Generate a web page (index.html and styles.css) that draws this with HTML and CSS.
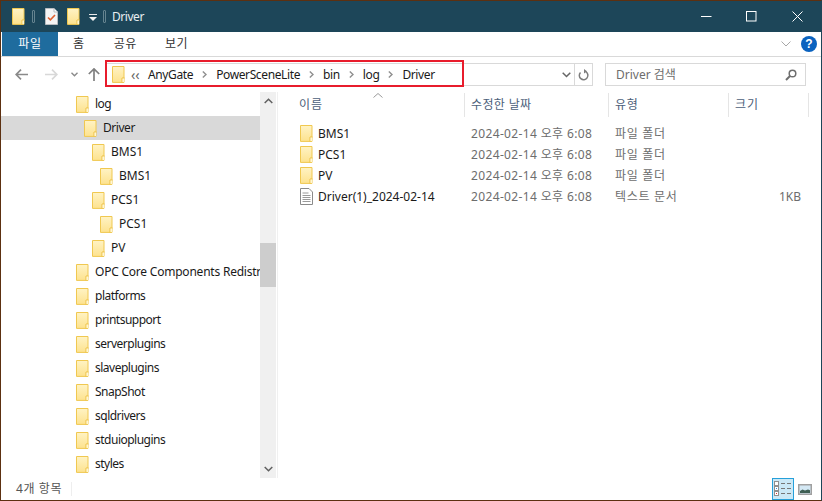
FILE: index.html
```html
<!DOCTYPE html>
<html lang="ko">
<head>
<meta charset="utf-8">
<title>Driver</title>
<link rel="stylesheet" href="styles.css">
</head>
<body>
<svg class="defs" width="0" height="0" aria-hidden="true">
  <defs>
    <linearGradient id="fg" x1="0" y1="0" x2="0" y2="1">
      <stop offset="0" stop-color="#fff3c4"/>
      <stop offset="1" stop-color="#fde28e"/>
    </linearGradient>
    <symbol id="folder" viewBox="0 0 13 17">
      <path d="M.5.5h11.500v15.900H.5z" fill="url(#fg)" stroke="#f0c850"/>
      <path d="M10 16.500v-4.500h2.500" fill="none" stroke="#ecc044"/>
      <rect x="10.500" y="12.500" width="1.500" height="3.500" fill="#fff6d2"/>
    </symbol>
  </defs>
</svg>
<div class="window">
  <header class="titlebar">
    <svg class="ic folder"><use href="#folder"/></svg>
    <span class="qsep first"></span>
    <svg class="note" width="13" height="17" viewBox="0 0 13 17">
      <path d="M.5.5h8.500l3.500 3.500v12.500H.5z" fill="#f4f4f4" stroke="#b8bcc0"/>
      <path d="M9 .5v3.500h3.500" fill="#fff" stroke="#b8bcc0"/>
      <path d="M3 9.500l2.400 2.400L10 7" fill="none" stroke="#e0602f" stroke-width="1.600"/>
    </svg>
    <svg class="ic folder second"><use href="#folder"/></svg>
    <svg class="qdrop" width="8" height="8" viewBox="0 0 8 8">
      <path d="M0 0h8v1H0z" fill="#e8e8e8"/>
      <path d="M0 3h8L4 7z" fill="#f2f2f2"/>
    </svg>
    <span class="qsep"></span>
    <span class="title">Driver</span>
    <div class="winctl">
      <svg width="12" height="12" viewBox="0 0 12 12"><path d="M0 5.500h10.500" stroke="#fff" fill="none"/></svg>
      <svg width="12" height="12" viewBox="0 0 12 12"><rect x=".5" y=".5" width="9.500" height="9.500" stroke="#fff" fill="none"/></svg>
      <svg width="12" height="12" viewBox="0 0 12 12"><path d="M.5.500l10 10M10.500.500l-10 10" stroke="#fff" fill="none"/></svg>
    </div>
  </header>

  <nav class="ribbon">
    <span class="tab active">파일</span>
    <span class="tab home">홈</span>
    <span class="tab share">공유</span>
    <span class="tab view">보기</span>
    <svg class="collapse" width="10" height="6" viewBox="0 0 10 6"><path d="M.5.500L5 5 9.500.500" fill="none" stroke="#a8a8a8"/></svg>
    <span class="help">?</span>
  </nav>

  <div class="addr-row">
    <svg class="navbtn back" width="13" height="11" viewBox="0 0 13 11"><path d="M6 .7L1.200 5.500 6 10.300M1.500 5.500H13" fill="none" stroke="#8a8a8a" stroke-width="1.700"/></svg>
    <svg class="navbtn fwd" width="13" height="11" viewBox="0 0 13 11"><path d="M7 .7l4.800 4.800L7 10.300M11.500 5.500H0" fill="none" stroke="#d8d8d8" stroke-width="1.700"/></svg>
    <svg class="navbtn hist" width="7" height="5" viewBox="0 0 7 5"><path d="M.5.700L3.500 3.700 6.500.700" fill="none" stroke="#8a8a8a" stroke-width="1.400"/></svg>
    <svg class="navbtn up" width="12" height="13" viewBox="0 0 12 13"><path d="M.8 6L6 .9 11.200 6M6 1.200V13" fill="none" stroke="#808080" stroke-width="1.700"/></svg>
    <div class="addr">
      <svg class="ic folder"><use href="#folder"/></svg>
      <span class="crumb-more">‹‹</span>
      <span class="crumb c1">AnyGate</span>
      <svg class="sep" width="5" height="7" viewBox="0 0 5 7"><path d="M.8.500L4 3.500.8 6.500" fill="none" stroke="#8f8f8f" stroke-width="1.400"/></svg>
      <span class="crumb">PowerSceneLite</span>
      <svg class="sep" width="5" height="7" viewBox="0 0 5 7"><path d="M.8.500L4 3.500.8 6.500" fill="none" stroke="#8f8f8f" stroke-width="1.400"/></svg>
      <span class="crumb">bin</span>
      <svg class="sep" width="5" height="7" viewBox="0 0 5 7"><path d="M.8.500L4 3.500.8 6.500" fill="none" stroke="#8f8f8f" stroke-width="1.400"/></svg>
      <span class="crumb">log</span>
      <svg class="sep" width="5" height="7" viewBox="0 0 5 7"><path d="M.8.500L4 3.500.8 6.500" fill="none" stroke="#8f8f8f" stroke-width="1.400"/></svg>
      <span class="crumb">Driver</span>
      <svg class="addr-drop" width="9" height="6" viewBox="0 0 9 6"><path d="M.7.700L4.500 4.500 8.300.700" fill="none" stroke="#666" stroke-width="1.500"/></svg>
      <span class="refresh">
        <svg width="11" height="12" viewBox="0 0 11 12"><path d="M7.800 2.700A4.300 4.300 0 1 1 2.500 3.400" fill="none" stroke="#7d7d7d" stroke-width="1.500"/><path d="M6 0v4.600l3-2.300z" fill="#7d7d7d"/></svg>
      </span>
    </div>
    <div class="search">
      <span class="search-text">Driver 검색</span>
      <svg width="12" height="12" viewBox="0 0 12 12"><circle cx="7.500" cy="4.500" r="3.300" fill="none" stroke="#6e6e6e" stroke-width="1.500"/><path d="M5 7L1 11" stroke="#6e6e6e" stroke-width="2"/></svg>
    </div>
  </div>

  <main class="content">
    <aside class="tree-pane">
      <ul class="tree">
        <li class="node l0"><svg class="ic folder"><use href="#folder"/></svg><span>log</span></li>
        <li class="node l1 selected"><svg class="ic folder"><use href="#folder"/></svg><span>Driver</span></li>
        <li class="node l2"><svg class="ic folder"><use href="#folder"/></svg><span>BMS1</span></li>
        <li class="node l3"><svg class="ic folder"><use href="#folder"/></svg><span>BMS1</span></li>
        <li class="node l2"><svg class="ic folder"><use href="#folder"/></svg><span>PCS1</span></li>
        <li class="node l3"><svg class="ic folder"><use href="#folder"/></svg><span>PCS1</span></li>
        <li class="node l2"><svg class="ic folder"><use href="#folder"/></svg><span>PV</span></li>
        <li class="node l0 wide"><svg class="ic folder"><use href="#folder"/></svg><span>OPC Core Components Redistr</span></li>
        <li class="node l0"><svg class="ic folder"><use href="#folder"/></svg><span>platforms</span></li>
        <li class="node l0"><svg class="ic folder"><use href="#folder"/></svg><span>printsupport</span></li>
        <li class="node l0"><svg class="ic folder"><use href="#folder"/></svg><span>serverplugins</span></li>
        <li class="node l0"><svg class="ic folder"><use href="#folder"/></svg><span>slaveplugins</span></li>
        <li class="node l0"><svg class="ic folder"><use href="#folder"/></svg><span>SnapShot</span></li>
        <li class="node l0"><svg class="ic folder"><use href="#folder"/></svg><span>sqldrivers</span></li>
        <li class="node l0"><svg class="ic folder"><use href="#folder"/></svg><span>stduioplugins</span></li>
        <li class="node l0"><svg class="ic folder"><use href="#folder"/></svg><span>styles</span></li>
      </ul>
      <div class="scrollbar">
        <svg class="sb-arrow" width="9" height="6" viewBox="0 0 9 6"><path d="M.7 5L4.500 1.200 8.300 5" fill="none" stroke="#606060" stroke-width="1.500"/></svg>
        <div class="sb-track"><div class="sb-thumb"></div></div>
        <svg class="sb-arrow" width="9" height="6" viewBox="0 0 9 6"><path d="M.7 1L4.500 4.800 8.300 1" fill="none" stroke="#606060" stroke-width="1.500"/></svg>
      </div>
    </aside>
    <section class="list-pane">
      <div class="sort-mark"><svg width="10" height="5" viewBox="0 0 10 5"><path d="M.5 4.500L5 .5l4.500 4" fill="none" stroke="#9a9a9a"/></svg></div>
      <div class="row head">
        <span class="name">이름</span>
        <span class="date">수정한 날짜</span>
        <span class="type">유형</span>
        <span class="size">크기</span>
      </div>
      <div class="row item"><span class="name"><svg class="ic folder"><use href="#folder"/></svg>BMS1</span><span class="date">2024-02-14 오후 6:08</span><span class="type">파일 폴더</span><span class="size"></span></div>
      <div class="row item"><span class="name"><svg class="ic folder"><use href="#folder"/></svg>PCS1</span><span class="date">2024-02-14 오후 6:08</span><span class="type">파일 폴더</span><span class="size"></span></div>
      <div class="row item"><span class="name"><svg class="ic folder"><use href="#folder"/></svg>PV</span><span class="date">2024-02-14 오후 6:08</span><span class="type">파일 폴더</span><span class="size"></span></div>
      <div class="row item"><span class="name"><svg class="ic" viewBox="0 0 13 17"><path d="M.5.500h8.500l3.500 3.500v12.500H.5z" fill="#fff" stroke="#8a8a8a"/><path d="M2.500 5h6M2.500 7.500h8M2.500 9.500h8M2.500 11.500h8M2.500 13.500h8" stroke="#9a9a9a" fill="none"/></svg>Driver(1)_2024-02-14</span><span class="date">2024-02-14 오후 6:08</span><span class="type">텍스트 문서</span><span class="size num">1KB</span></div>
    </section>
  </main>

  <footer class="status">
    <span class="count">4개 항목</span>
    <span class="status-sep"></span>
    <div class="views">
      <span class="vbtn on">
        <svg width="18" height="16" viewBox="0 0 18 16"><g fill="#fff" stroke="#8f8f8f"><rect x=".5" y=".5" width="4" height="4"/><rect x=".5" y="5.500" width="4" height="4"/><rect x=".5" y="10.500" width="4" height="4"/></g><path d="M7 2.500h4M13 2.500h4M7 7.500h4M13 7.500h4M7 12.500h4M13 12.500h4" stroke="#777"/><path d="M2 7h1v1H2z" fill="#3a8de0"/><path d="M2 12h1v1H2z" fill="#d83030"/></svg>
      </span>
      <span class="vbtn">
        <svg width="14" height="11" viewBox="0 0 14 11"><rect x=".75" y=".75" width="12.500" height="9.500" fill="#d4e8f4" stroke="#a0a0a0" stroke-width="1.500"/><path d="M2 7l2.500-1.500 2.500 1 3-1 2 .8V9H2z" fill="#3f5f54"/></svg>
      </span>
    </div>
  </footer>

  <div class="annotation"></div>
</div>
</body>
</html>
```

FILE: styles.css
```css
* { box-sizing: border-box; }
html, body { margin: 0; padding: 0; height: 100%; overflow: hidden; }
body { font: 12px/16px "Noto Sans", "Noto Sans CJK KR", sans-serif; color: #1a1a1a; background: #fff; }
.defs { position: absolute; }
ul { list-style: none; margin: 0; padding: 0; }
svg { display: block; flex: none; }

.window {
  position: relative;
  width: 822px;
  height: 501px;
  display: flex;
  flex-direction: column;
  background: #fff;
  border: 1px solid #5c3011;
  border-right-color: #1d4659;
}
.ic { width: 13px; height: 17px; }

.titlebar {
  height: 31px;
  background: #1d4659;
  display: flex;
  align-items: center;
  padding-left: 11px;
  color: #e8eef1;
  flex: none;
}
.qsep {
  width: 3px; height: 13px; margin: 0 10px 0 7px;
  border: 1px solid #65838f;
  border-radius: 1px;
}
.qsep.first { margin-left: 7px; }
.note { margin-right: 9px; }
.folder.second { margin-right: 9px; }
.qdrop { margin-top: 3px; }
.qdrop + .qsep { margin-left: 6px; margin-right: 6px; }
.title { font-size: 12px; letter-spacing: -.45px; }
.winctl { margin-left: auto; display: flex; padding-right: 17px; }
.winctl svg { width: 12px; height: 12px; }
.winctl svg:nth-child(1) { margin-right: 33px; }
.winctl svg:nth-child(2) { margin-right: 34px; }

.ribbon {
  height: 25px;
  flex: none;
  display: flex;
  align-items: center;
  padding-left: 1px;
  border-bottom: 1px solid #d9d9d9;
}
.tab { font-size: 12px; line-height: 24px; height: 24px; color: #333; letter-spacing: .6px; }
.tab.active { width: 56px; background: #1f6c9e; color: #fff; text-align: center; align-self: flex-start; }
.tab.home { margin-left: 15px; }
.tab.share { margin-left: 29px; }
.tab.view { margin-left: 28px; }
.collapse { margin-left: auto; margin-right: 10px; }
.help {
  width: 16px; height: 16px; margin-right: 4px;
  border-radius: 50%;
  background: #0a62bf;
  color: #fff;
  font: bold 12px/16px "Liberation Sans", sans-serif;
  text-align: center;
  letter-spacing: 0;
}

.addr-row {
  height: 35px;
  flex: none;
  display: flex;
  align-items: center;
  padding: 0 14px;
}
.navbtn.back { margin-right: 17px; }
.navbtn.fwd { margin-right: 13px; }
.navbtn.hist { margin-right: 10px; }
.navbtn.up { margin-right: 6px; }
.addr {
  width: 487px;
  height: 23px;
  display: flex;
  align-items: center;
  border: 1px solid #d9d9d9;
  padding-left: 5px;
  margin-right: 12px;
}
.crumb-more { margin-left: 6px; width: 17px; color: #666; font-size: 14px; }
.crumb { white-space: nowrap; letter-spacing: -.38px; }
.sep { margin: 0 9px; }
.addr-drop { margin-left: auto; margin-right: 3px; }
.refresh {
  width: 18px; height: 21px;
  border-left: 1px solid #d9d9d9;
  display: flex; align-items: center; justify-content: center;
}
.search {
  width: 201px;
  height: 23px;
  border: 1px solid #d9d9d9;
  display: flex;
  align-items: center;
  justify-content: space-between;
  padding: 0 8px 0 10px;
  color: #6d6d6d;
}

.content { flex: 1; min-height: 0; display: flex; }
.tree-pane { width: 277px; flex: none; display: flex; border-right: 1px solid #f0f0f0; }
.tree { width: 259px; flex: none; overflow: hidden; }
.node { height: 24px; display: flex; align-items: center; gap: 6px; white-space: nowrap; overflow: hidden; }
.l0 { padding-left: 75px; letter-spacing: -.5px; }
.l0.wide { letter-spacing: -.22px; }
.l1 { padding-left: 83px; letter-spacing: -.45px; }
.l2 { padding-left: 91px; }
.l3 { padding-left: 99px; }
.selected { background: #d9d9d9; }
.scrollbar { width: 16px; flex: none; background: #f0f0f0; display: flex; flex-direction: column; align-items: center; }
.sb-arrow { margin: 6px 0; }
.sb-track { flex: 1; width: 100%; padding-top: 133px; }
.sb-thumb { height: 44px; background: #cdcdcd; }

.list-pane { flex: 1; position: relative; padding-left: 12px; }
.sort-mark { position: absolute; left: 95px; top: 1px; }
.row { display: flex; align-items: center; white-space: nowrap; }
.row span { display: block; }
.row.head { height: 26px; color: #4c607a; margin-bottom: 5px; letter-spacing: .9px; }
.row.head span { height: 24px; line-height: 24px; border-right: 1px solid #e5e5e5; }
.row.item { height: 21px; }
.name { width: 175px; padding-left: 10px; display: flex !important; align-items: center; gap: 5px; }
.head .name { padding-left: 9px; }
.date { width: 144px; padding-left: 6px; color: #6d6d6d; letter-spacing: .36px; }
.type { width: 120px; padding-left: 6px; color: #6d6d6d; letter-spacing: .7px; }
.size { width: 80px; padding-left: 6px; color: #6d6d6d; }
.head .date, .head .type, .head .size { color: #4c607a; }
.size.num { text-align: right; padding-right: 8px; }

.status { height: 22px; flex: none; display: flex; align-items: center; padding-left: 15px; color: #555; }
.count { letter-spacing: .6px; }
.status-sep { width: 1px; height: 14px; background: #eee; margin-left: 9px; }
.views { margin-left: auto; display: flex; padding-right: 5px; }
.vbtn { width: 22px; height: 22px; display: flex; align-items: center; justify-content: center; }
.vbtn.on { background: #cbe8f6; border: 1px solid #26a0da; }

.annotation {
  position: absolute;
  left: 104px; top: 59px;
  width: 359px; height: 27px;
  border: 2px solid #e81c2c;
  pointer-events: none;
}
```
